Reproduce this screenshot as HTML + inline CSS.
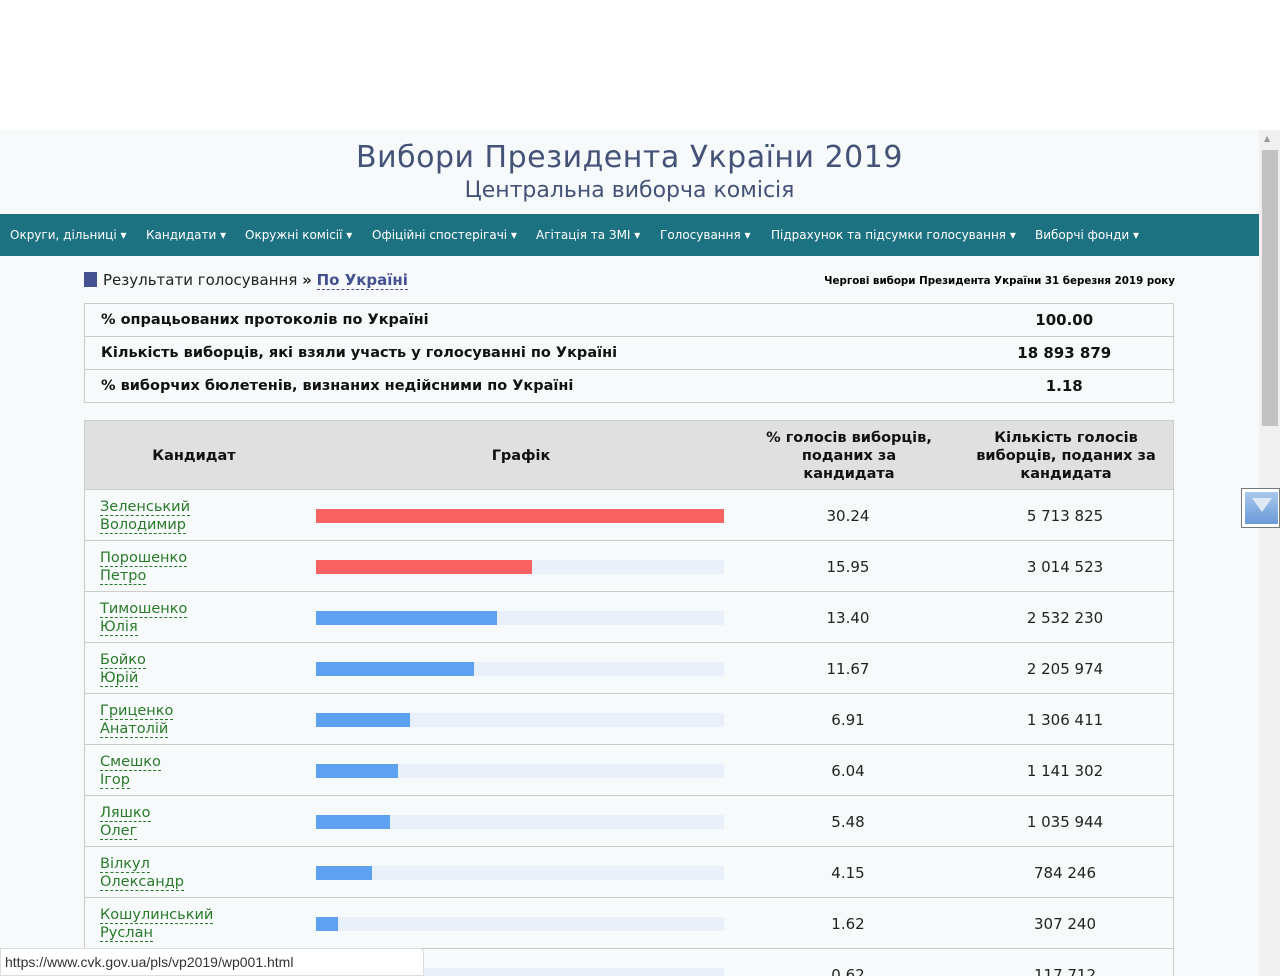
<!DOCTYPE html>
<html><head><meta charset="utf-8"><style>
*{margin:0;padding:0;box-sizing:border-box}
html,body{width:1280px;height:976px;overflow:hidden}
body{background:#fff;font-family:"DejaVu Sans","Liberation Sans",sans-serif;position:relative}
.page{position:absolute;left:0;top:130px;width:1259px;height:846px;background:#f6fafb}
.t1{position:absolute;top:140px;left:0;width:1259px;text-align:center;font-size:30px;color:#445277;letter-spacing:0.5px}
.t2{position:absolute;top:178px;left:0;width:1259px;text-align:center;font-size:22px;color:#445277}
.nav{position:absolute;top:214px;left:0;width:1259px;height:42px;background:#1d7282;color:#fff;font-size:12px}
.nav span{position:absolute;top:14px;white-space:nowrap}
.bc{position:absolute;top:271px;left:84px;font-size:15px;color:#222}
.bc i{display:inline-block;width:13px;height:15px;background:#44508f;vertical-align:-2px;margin-right:6px}
.bc b{color:#44508f;border-bottom:1px dashed #44508f}
.date{position:absolute;top:275px;right:105px;font-size:10.3px;font-weight:bold;color:#000;white-space:nowrap}
table{border-collapse:collapse;position:absolute;left:84px;width:1090px}
.s td{border-top:1px solid #ccc;border-bottom:1px solid #ccc;height:33px;font-weight:bold;font-size:14.5px;padding-left:16px;color:#111}
.s td:first-child{border-left:1px solid #ccc}
.s td.v{text-align:center;padding:0;width:218px;font-size:15px;border-right:1px solid #ccc}
.r{position:absolute;left:84px;width:1090px;border-bottom:1px solid #ccc;height:51px}
.h{position:absolute;top:420px;left:84px;width:1090px;height:70px;background:#e0e0e0;border:1px solid #ccc;font-weight:bold;font-size:14.5px;color:#111}
.h div{position:absolute;text-align:center;line-height:18px}
.nm{position:absolute;left:16px;top:8px;font-size:14.5px;color:#2a7a2a;line-height:18px}
.nm span{border-bottom:1px dashed #2a7a2a}
.bg{position:absolute;left:232px;top:19px;width:408px;height:14px;background:#e9f0fa}
.bar{position:absolute;left:0;top:0;height:14px}
.p{position:absolute;left:664px;width:200px;text-align:center;top:17px;font-size:15px;color:#222}
.c{position:absolute;left:881px;width:200px;text-align:center;top:17px;font-size:15px;color:#222}
.sb{position:absolute;left:1259px;top:130px;width:21px;height:846px;background:#f0f0f0}
.th{position:absolute;left:1262px;top:150px;width:16px;height:276px;background:#c2c2c2}
.st{position:absolute;left:0;top:948px;width:424px;height:28px;background:#fff;border:1px solid #ddd;border-radius:0 4px 0 0;font-size:14px;color:#333;padding:5px 0 0 4px;font-family:"Liberation Sans",sans-serif}
</style></head><body>
<div class="page"></div>
<div class="t1">Вибори Президента України 2019</div>
<div class="t2">Центральна виборча комісія</div>
<div class="nav">
<span style="left:10px">Округи, дільниці ▾</span>
<span style="left:146px">Кандидати ▾</span>
<span style="left:245px">Окружні комісії ▾</span>
<span style="left:372px">Офіційні спостерігачі ▾</span>
<span style="left:536px">Агітація та ЗМІ ▾</span>
<span style="left:660px">Голосування ▾</span>
<span style="left:771px">Підрахунок та підсумки голосування ▾</span>
<span style="left:1035px">Виборчі фонди ▾</span>
</div>
<div class="bc"><i></i>Результати голосування <span style="font-weight:bold">»</span> <b>По Україні</b></div>
<div class="date">Чергові вибори Президента України 31 березня 2019 року</div>
<table class="s" style="top:303px">
<tr><td>% опрацьованих протоколів по Україні</td><td class="v">100.00</td></tr>
<tr><td>Кількість виборців, які взяли участь у голосуванні по Україні</td><td class="v">18 893 879</td></tr>
<tr><td>% виборчих бюлетенів, визнаних недійсними по Україні</td><td class="v">1.18</td></tr>
</table>
<div class="h">
<div style="left:0;width:218px;top:26px">Кандидат</div>
<div style="left:232px;width:408px;top:26px">Графік</div>
<div style="left:674px;width:180px;top:8px">% голосів виборців, поданих за кандидата</div>
<div style="left:881px;width:200px;top:8px">Кількість голосів виборців, поданих за кандидата</div>
</div>
<div style="position:absolute;left:84px;top:490px;width:1px;height:486px;background:#ccc"></div>
<div style="position:absolute;left:1173px;top:490px;width:1px;height:486px;background:#ccc"></div>

<div class="r" style="top:490px"><div class="nm"><span>Зеленський</span><br><span>Володимир</span></div><div class="bg"><div class="bar" style="width:408px;background:#f96262"></div></div><div class="p">30.24</div><div class="c">5 713 825</div></div>
<div class="r" style="top:541px"><div class="nm"><span>Порошенко</span><br><span>Петро</span></div><div class="bg"><div class="bar" style="width:216px;background:#f96262"></div></div><div class="p">15.95</div><div class="c">3 014 523</div></div>
<div class="r" style="top:592px"><div class="nm"><span>Тимошенко</span><br><span>Юлія</span></div><div class="bg"><div class="bar" style="width:181px;background:#5ea1f0"></div></div><div class="p">13.40</div><div class="c">2 532 230</div></div>
<div class="r" style="top:643px"><div class="nm"><span>Бойко</span><br><span>Юрій</span></div><div class="bg"><div class="bar" style="width:158px;background:#5ea1f0"></div></div><div class="p">11.67</div><div class="c">2 205 974</div></div>
<div class="r" style="top:694px"><div class="nm"><span>Гриценко</span><br><span>Анатолій</span></div><div class="bg"><div class="bar" style="width:94px;background:#5ea1f0"></div></div><div class="p">6.91</div><div class="c">1 306 411</div></div>
<div class="r" style="top:745px"><div class="nm"><span>Смешко</span><br><span>Ігор</span></div><div class="bg"><div class="bar" style="width:82px;background:#5ea1f0"></div></div><div class="p">6.04</div><div class="c">1 141 302</div></div>
<div class="r" style="top:796px"><div class="nm"><span>Ляшко</span><br><span>Олег</span></div><div class="bg"><div class="bar" style="width:74px;background:#5ea1f0"></div></div><div class="p">5.48</div><div class="c">1 035 944</div></div>
<div class="r" style="top:847px"><div class="nm"><span>Вілкул</span><br><span>Олександр</span></div><div class="bg"><div class="bar" style="width:56px;background:#5ea1f0"></div></div><div class="p">4.15</div><div class="c">784 246</div></div>
<div class="r" style="top:898px"><div class="nm"><span>Кошулинський</span><br><span>Руслан</span></div><div class="bg"><div class="bar" style="width:22px;background:#5ea1f0"></div></div><div class="p">1.62</div><div class="c">307 240</div></div>
<div class="r" style="top:949px;height:27px;border:none"><div class="bg"><div class="bar" style="width:9px;background:#5ea1f0"></div></div><div class="p">0.62</div><div class="c">117 712</div></div>

<div class="st">https://www.cvk.gov.ua/pls/vp2019/wp001.html</div>
<div class="sb"></div><div class="th"></div>
<div style="position:absolute;left:1264px;top:134px;font-size:8px;color:#999">▲</div>
<div style="position:absolute;left:1241px;top:488px;width:39px;height:40px;border:1px solid #777;background:#fff"></div>
<div style="position:absolute;left:1245px;top:492px;width:33px;height:32px;background:linear-gradient(#a9c8ec,#6a9ad8)"></div>
<div style="position:absolute;left:1252px;top:498px;width:0;height:0;border-left:10px solid transparent;border-right:10px solid transparent;border-top:14px solid #dfe9f6"></div>
</body></html>
